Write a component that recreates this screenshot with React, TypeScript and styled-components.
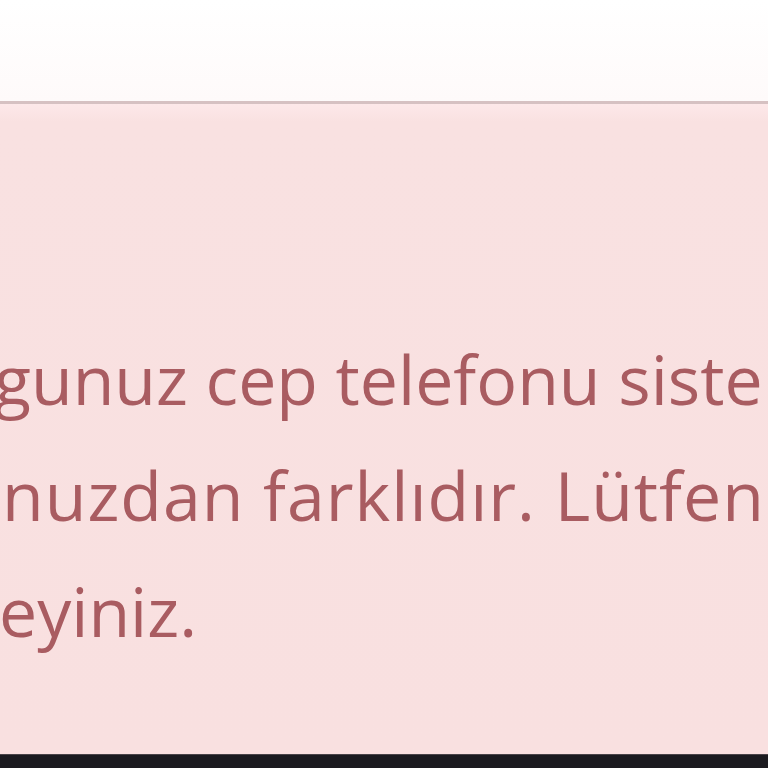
import styled, { createGlobalStyle } from 'styled-components'

const GlobalStyle = createGlobalStyle`
html, body {
  margin: 0;
  padding: 0;
  background: #fffdfd;
  overflow: hidden;
}
`

const Page = styled.div`
  display: flex;
  flex-direction: column;
  height: 768px;
  overflow: hidden;
`

const TopSpace = styled.div`
  height: 101px;
  background: linear-gradient(#ffffff, #fefafa);
  flex-shrink: 0;
`

const Alert = styled.section`
  flex: 1;
  border-top: 3px solid #d6c1c2;
  background: linear-gradient(#fde8e9 0, #f9e1e1 18px, #f9e0e0 100%);
  padding: 217px 0 0 0;
  color: #a95c61;
  font-family: "Open Sans", "Liberation Sans", sans-serif;
  font-size: 68px;
  line-height: 116px;
  overflow: hidden;
`

const Line = styled.div<{ $offset: number; $spacing: number }>`
  white-space: nowrap;
  margin-left: ${(p) => p.$offset}px;
  letter-spacing: ${(p) => p.$spacing}px;
`

const Footer = styled.div`
  height: 13px;
  background: #1b1a1f;
  border-top: 1px solid #4a4348;
  flex-shrink: 0;
`

const lines = [
  { text: 'gunuz cep telefonu siste', offset: -6, spacing: 0 },
  { text: 'nuzdan farklıdır. Lütfen', offset: 2, spacing: 1 },
  { text: 'eyiniz.', offset: -1, spacing: 0 },
]

const App = (): JSX.Element => (
  <>
    <GlobalStyle />
    <Page>
      <TopSpace />
      <Alert>
        {lines.map((line) => (
          <Line key={line.text} $offset={line.offset} $spacing={line.spacing}>{line.text}</Line>
        ))}
      </Alert>
      <Footer />
    </Page>
  </>
)

export default App
